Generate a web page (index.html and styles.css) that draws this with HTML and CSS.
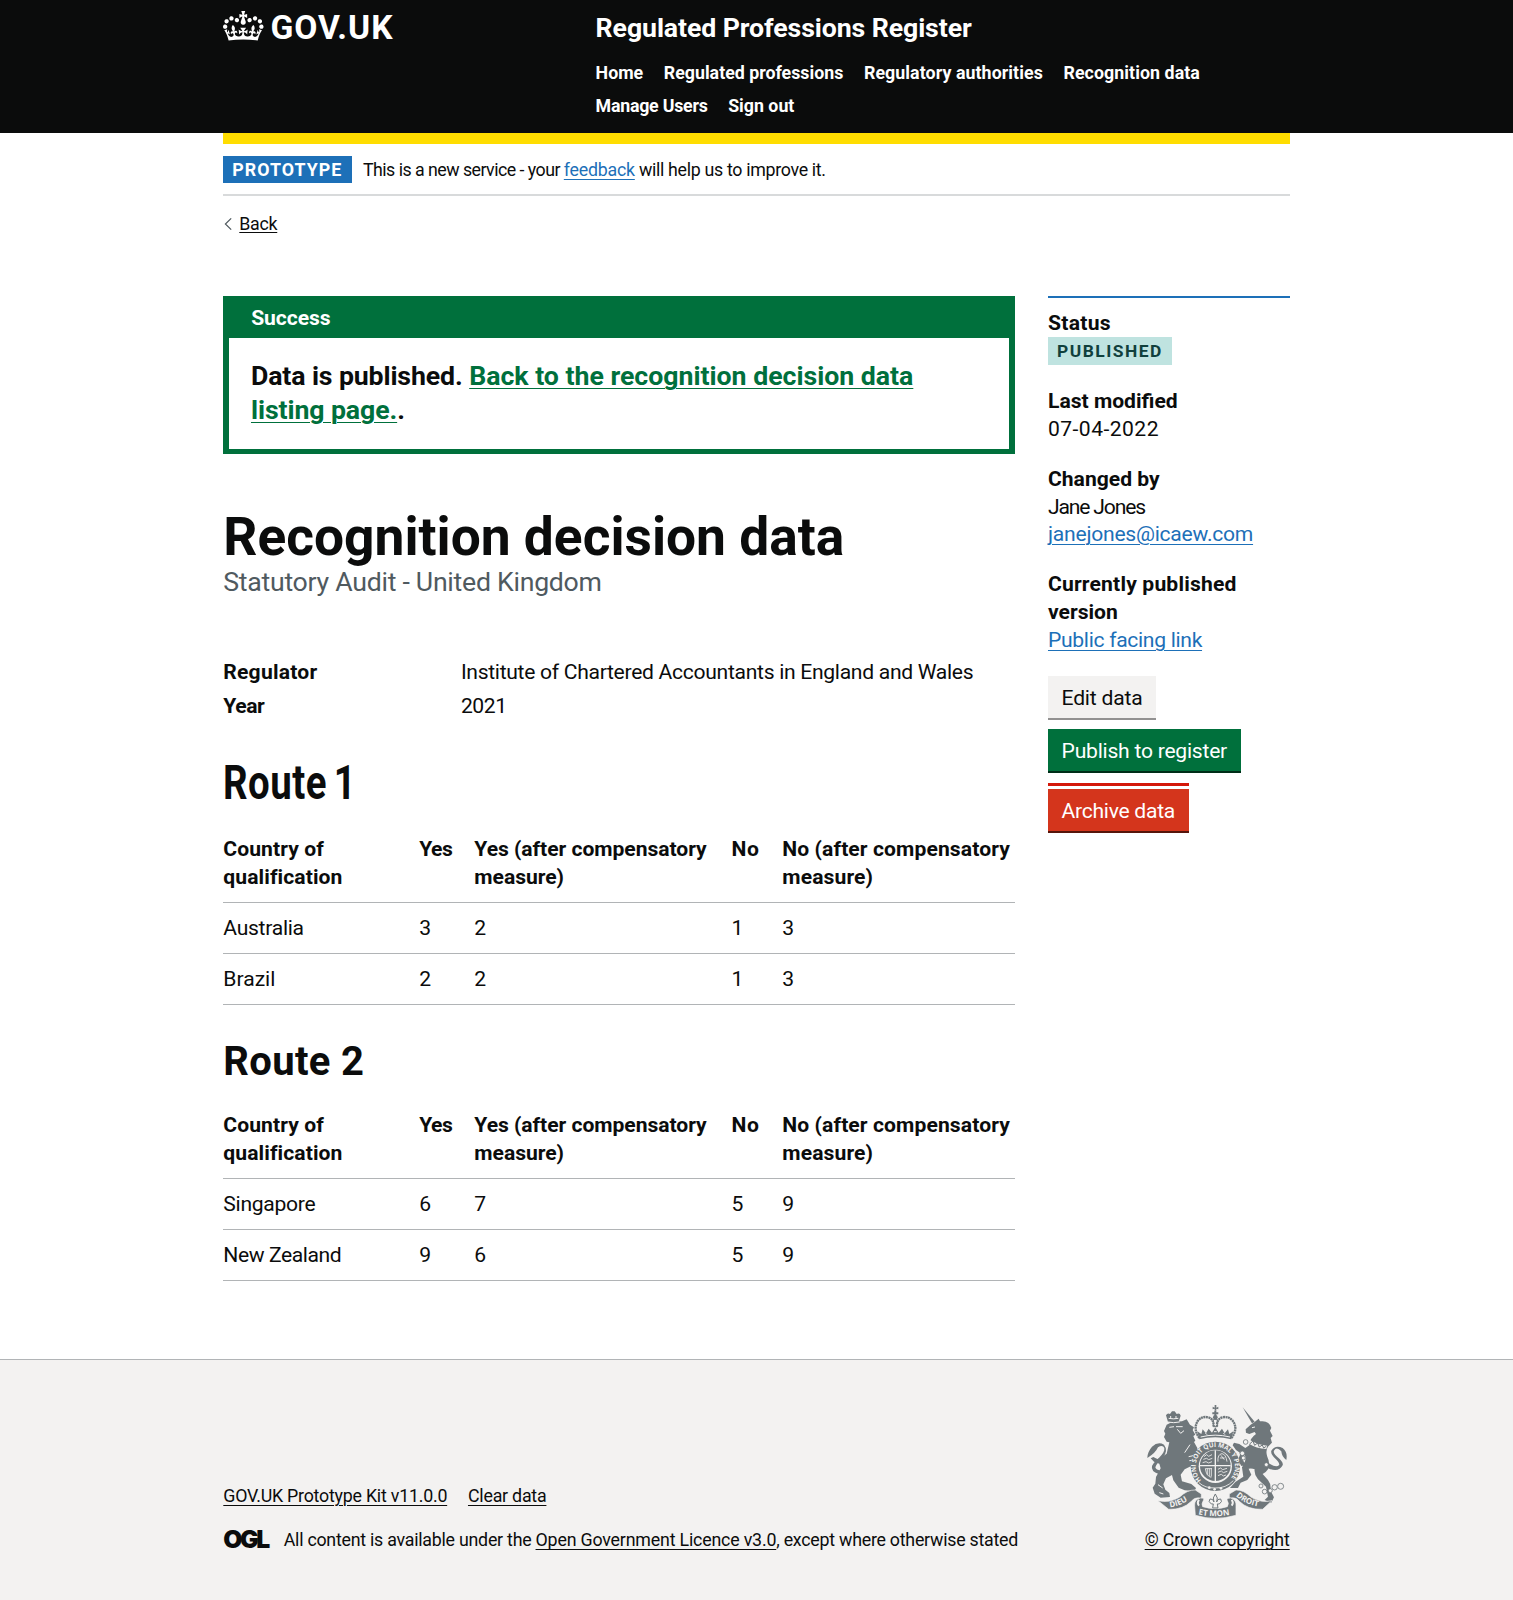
FILE: index.html
```html
<!DOCTYPE html>
<html lang="en">
<head>
<meta charset="utf-8">
<title>Recognition decision data - Regulated Professions Register</title>
<link rel="stylesheet" href="styles.css">
</head>
<body>
<header class="header">
  <div class="container header-inner">
    <a class="logo" href="#">
      <svg class="logo-crown" viewBox="0 0 132 97" aria-hidden="true"><path fill="currentColor" fill-rule="evenodd" d="M25 30.2c3.5 1.5 7.7-.2 9.1-3.7 1.5-3.6-.2-7.8-3.9-9.2-3.6-1.4-7.6.3-9.1 3.9-1.4 3.5.3 7.5 3.9 9zM9 39.5c3.6 1.5 7.8-.2 9.2-3.7 1.5-3.6-.2-7.8-3.9-9.1-3.6-1.5-7.6.2-9.1 3.8-1.4 3.5.3 7.5 3.8 9zM4.4 57.2c3.5 1.5 7.7-.2 9.1-3.8 1.5-3.6-.2-7.7-3.9-9.1-3.5-1.5-7.6.3-9.1 3.8-1.4 3.5.3 7.6 3.9 9.1zm38.3-21.4c3.5 1.5 7.7-.2 9.1-3.8 1.5-3.6-.2-7.7-3.9-9.1-3.6-1.5-7.6.3-9.1 3.8-1.3 3.6.4 7.7 3.9 9.1zm64.4-5.6c-3.6 1.5-7.8-.2-9.1-3.7-1.5-3.6.2-7.8 3.8-9.2 3.6-1.4 7.7.3 9.2 3.9 1.3 3.5-.4 7.5-3.9 9zm15.9 9.3c-3.6 1.5-7.7-.2-9.1-3.7-1.5-3.6.2-7.8 3.7-9.1 3.6-1.5 7.7.2 9.2 3.8 1.5 3.5-.3 7.5-3.8 9zm4.7 17.7c-3.6 1.5-7.8-.2-9.2-3.8-1.5-3.6.2-7.7 3.9-9.1 3.6-1.5 7.7.3 9.2 3.8 1.3 3.5-.4 7.6-3.9 9.1zM89.3 35.8c-3.6 1.5-7.8-.2-9.2-3.8-1.4-3.6.2-7.7 3.9-9.1 3.6-1.5 7.7.3 9.2 3.8 1.4 3.6-.3 7.7-3.9 9.1zM69.7 17.7l8.9 4.7V9.3l-8.9 2.8c-.2-.3-.5-.6-.9-.9L72.4 0H59.6l3.5 11.2c-.3.3-.6.5-.9.9l-8.8-2.8v13.1l8.8-4.7c.3.3.6.7.9.9l-5 15.4v.1c-.2.8-.4 1.6-.4 2.4 0 4.1 3.1 7.5 7 8.1h.2c.3 0 .7.1 1 .1.4 0 .7 0 1-.1h.2c4-.6 7.1-4.1 7.1-8.1 0-.8-.1-1.7-.4-2.4V34l-5.1-15.4c.4-.2.7-.6 1-.9zM66 92.8c16.9 0 32.8 1.1 47.1 3.2 4-16.9 8.9-26.7 14-33.5l-9.6-3.4c1 4.9 1.1 7.2 0 10.2-1.5-1.4-3-4.3-4.2-8.7L108.6 76c2.8-2 5-3.2 7.5-3.3-4.4 9.4-10 11.9-13.6 11.2-4.3-.8-6.3-4.6-5.6-7.9 1-4.7 5.7-5.9 8-.5 4.3-8.7-3-11.4-7.6-8.8 7.1-7.2 7.9-13.5 2.1-21.1-8 6.1-8.1 12.3-4.5 20.8-4.7-5.4-12.1-2.5-9.5 6.2 3.4-5.2 7.9-2 7.2 3.1-.6 4.3-6.4 7.8-13.5 7.2-10.3-.9-10.9-8-11.2-13.8 2.5-.5 7.1 1.8 11 7.3L80.2 60c-4.1 4.4-8 5.3-12.3 5.4 1.4-4.4 8-11.6 8-11.6H55.5s6.4 7.2 7.9 11.6c-4.2-.1-8-1-12.3-5.4l1.4 16.4c3.9-5.5 8.5-7.7 10.9-7.3-.3 5.8-.9 12.8-11.1 13.8-7.2.6-12.9-2.9-13.5-7.2-.7-5 3.8-8.3 7.1-3.1 2.7-8.7-4.6-11.6-9.4-6.2 3.7-8.5 3.6-14.7-4.6-20.8-5.8 7.6-5 13.9 2.2 21.1-4.7-2.6-11.9.1-7.7 8.8 2.3-5.5 7.1-4.2 8.1.5.7 3.3-1.3 7.1-5.7 7.9-3.5.7-9-1.8-13.5-11.2 2.5.1 4.7 1.3 7.5 3.3l-4.7-15.4c-1.2 4.4-2.7 7.2-4.3 8.7-1.1-3-.9-5.3 0-10.2l-9.5 3.4c5 6.9 9.9 16.7 14 33.5 14.8-2.1 30.8-3.2 47.7-3.2z"/></svg>
      <span class="logo-text">GOV.UK</span>
    </a>
    <div class="header-content">
      <a class="service-name" href="#">Regulated Professions Register</a>
      <nav class="nav">
        <a href="#">Home</a>
        <a href="#">Regulated professions</a>
        <a href="#" class="nav-open">Regulatory authorities</a>
        <a href="#" class="nav-open">Recognition data</a>
        <a href="#" class="nav-tight">Manage Users</a>
        <a href="#">Sign out</a>
      </nav>
    </div>
  </div>
</header>

<div class="container">
  <div class="header-bar"></div>
  <div class="phase">
    <strong class="phase-tag">PROTOTYPE</strong>
    <span class="phase-text"><span class="phase-intro">This is a new service - your </span><a class="link phase-link" href="#">feedback</a> will help us to improve it.</span>
  </div>
  <a class="back" href="#"><svg class="back-icon" viewBox="0 0 8 12" aria-hidden="true"><path d="M7.2.4 1.4 6l5.8 5.6" fill="none" stroke="#505a5f" stroke-width="1.2"/></svg><span class="back-text">Back</span></a>

  <main class="main">
    <div class="content">
      <section class="banner">
        <h2 class="banner-title">Success</h2>
        <div class="banner-body"><span class="banner-lead">Data is published.</span> <a href="#">Back to the recognition decision data <br><span class="banner-end">listing page.</span></a>.</div>
      </section>
      <h1 class="title">Recognition decision data</h1>
      <p class="caption">Statutory Audit - United Kingdom</p>
      <dl class="summary">
        <dt class="regulator">Regulator</dt><dd>Institute of Chartered Accountants in England and Wales</dd>
        <dt class="year">Year</dt><dd class="digits">2021</dd>
      </dl>

      <h2 class="route route-narrow"><span>Route 1</span></h2>
      <table class="table">
        <colgroup><col class="c1"><col class="c2"><col class="c3"><col class="c4"><col class="c5"></colgroup>
        <thead><tr><th>Country of qualification</th><th class="yes">Yes</th><th>Yes (after compensatory measure)</th><th class="no">No</th><th class="no-after">No (after compensatory measure)</th></tr></thead>
        <tbody>
          <tr><td>Australia</td><td>3</td><td>2</td><td>1</td><td>3</td></tr>
          <tr><td class="open">Brazil</td><td>2</td><td>2</td><td>1</td><td>3</td></tr>
        </tbody>
      </table>

      <h2 class="route">Route 2</h2>
      <table class="table">
        <colgroup><col class="c1"><col class="c2"><col class="c3"><col class="c4"><col class="c5"></colgroup>
        <thead><tr><th>Country of qualification</th><th class="yes">Yes</th><th>Yes (after compensatory measure)</th><th class="no">No</th><th class="no-after">No (after compensatory measure)</th></tr></thead>
        <tbody>
          <tr><td>Singapore</td><td>6</td><td>7</td><td>5</td><td>9</td></tr>
          <tr><td class="tight">New Zealand</td><td>9</td><td>6</td><td>5</td><td>9</td></tr>
        </tbody>
      </table>
    </div>

    <aside class="side">
      <div class="side-block"><strong class="status">Status</strong><br><span class="tag">PUBLISHED</span></div>
      <div class="side-block"><strong>Last modified</strong><br><span class="date">07-04-2022</span></div>
      <div class="side-block"><strong>Changed by</strong><br><span class="name">Jane Jones</span><br><a class="link email" href="#">janejones@icaew.com</a></div>
      <div class="side-block"><strong class="currently">Currently published</strong><br><strong>version</strong><br><a class="link public" href="#">Public facing link</a></div>
      <a class="button button-grey" href="#">Edit data</a>
      <a class="button button-green" href="#">Publish to register</a>
      <div class="archive"><a class="button button-red" href="#">Archive data</a></div>
    </aside>
  </main>
</div>

<footer class="footer">
  <div class="container footer-inner">
    <div class="footer-left">
      <div class="footer-links"><a href="#">GOV.UK Prototype Kit v11.0.0</a><a href="#">Clear data</a></div>
      <div class="licence"><span class="ogl">OGL</span><span>All content is available under the <a class="licence-link" href="#">Open Government Licence v3.0</a>, except where otherwise stated</span></div>
    </div>
    <div class="footer-right">
      <svg class="crest" viewBox="48 160 424 346" aria-hidden="true">
        <defs>
          <path id="ring" d="M214 389A59 59 0 1 1 300 387"/>
          <path id="scroll-left" d="M120 470Q158 466 188 438"/>
          <path id="scroll-mid" d="M205 491Q256 503 312 490"/>
          <path id="scroll-right" d="M318 436Q345 464 400 470"/>
        </defs>
        <!-- lion -->
        <g fill="#6f777b">
          <path d="M110 222l16-8 30-2 14-6 10 16 12 8-4 8 8 14-6 4 6 14-4 4 10 18 0 14 8 14-6 14-16-2-4 14-20 10-12 16 4 20 28 8 14 12-4 9-30-2-18-8-16-22-4-16-18 10-8 18 6 16 12 10 2 12-28 2-18-12-6-18 8-12 2-20 14-26-4-14-16-6-10-10 8-4 12 6 8-2 20-14 8-34-8-2-8-14 4-10-4-8z"/>
          <path d="M114 214l-6-20q4-8 12-4l6-8h8l6 8q10-4 12 5l-6 19q-16 4-32 0z"/>
          <path d="M86 370Q62 362 66 346C74 328 106 312 103 292Q98 281 84 290Q76 308 52 322Q52 304 66 288Q84 272 102 282Q116 300 98 322Q78 340 76 350Q78 358 92 360z"/>
        </g>
        <g fill="none" stroke="#f3f2f1" stroke-width="3">
          <path d="M113 214q18 4 36 0M116 203q14 3 29 0M122 196v6M138 196v6M118 230l14-2M142 236l10 12 10-8M138 228l20 0M84 402l14 10M88 426l12 4M180 282l-16 24M176 318l14-3M178 330l13-1"/>
        </g>
        <!-- unicorn -->
        <g fill="#6f777b">
          <path d="M338 170L374 213L366 218z"/>
          <path d="M374 214L386 204L390 212Q418 208 424 232L420 240L428 256L422 262L426 276L414 288Q406 300 412 318Q422 338 414 356Q408 366 398 370L414 388Q424 400 422 420L432 440L424 456L404 448L414 438L408 408L384 386Q372 372 374 356Q366 352 356 354L364 372L352 388L332 396L324 412L300 412L316 394L340 378L336 350Q352 326 344 312L338 328L348 342L334 346L324 328L332 308L318 298L308 284L312 276L328 280L346 292L358 284Q358 264 378 250L374 244L358 250L348 246L347 236L362 222Z"/>
          <path d="M412 352Q446 368 458 344C464 328 426 314 432 300Q440 286 454 302Q456 320 469 328Q474 304 458 292Q436 282 424 300C420 318 448 328 448 342Q440 354 414 336z"/>
        </g>
        <path d="M360 268q24 15 52 17l-3 10q-30-2-52-16z" fill="#f3f2f1"/>
        <path d="M359 280l10-9 5 13 9-7 5 12 9-6 4 9 8-5" fill="none" stroke="#6f777b" stroke-width="3"/>
        <path d="M366 231l9-2" stroke="#f3f2f1" stroke-width="3"/>
        <g fill="#f3f2f1" stroke="#6f777b" stroke-width="2.5">
          <circle cx="347" cy="274" r="7"/><circle cx="337" cy="308" r="7"/><circle cx="340" cy="322" r="6"/><circle cx="409" cy="342" r="6"/><circle cx="393" cy="406" r="6"/><circle cx="404" cy="423" r="7"/><circle cx="421" cy="420" r="6"/><circle cx="434" cy="410" r="8"/><circle cx="452" cy="407" r="9"/>
        </g>
        <!-- shield and garter -->
        <circle cx="256" cy="347" r="74" fill="#6f777b"/>
        <circle cx="256" cy="347" r="50" fill="#f3f2f1"/>
        <circle cx="256" cy="345" r="46" fill="#6f777b"/>
        <path d="M256 299v92M210 345h92" stroke="#f3f2f1" stroke-width="4"/>
        <g fill="none" stroke="#f3f2f1" stroke-width="2.5">
          <path d="M222 318l8-6 6 5 10-5M220 326l10-3 6 4 11-4M218 336l10-3 8 4 10-4M264 333q-2-22 12-24 12 2 15 24M270 322l14 0M273 314l10 13M226 354q4 24 18 26M232 354v18M238 354v22M244 353v25M226 354h20M264 356l8-4 6 5 13-4M264 365l10-4 6 5 12-4M264 375l10-4 6 5 8-3"/>
          <path d="M207 396q18 17 49 16 32 1 54-22"/>
        </g>
        <g fill="#f3f2f1"><circle cx="238" cy="411" r="4"/><circle cx="254" cy="416" r="4"/><circle cx="273" cy="413" r="4"/></g>
        <text class="crest-ring" textLength="268" lengthAdjust="spacingAndGlyphs"><textPath href="#ring">HONI SOIT QUI MAL Y PENSE</textPath></text>
        <!-- royal crown -->
        <path d="M208 262q-20-28-4-52 12-14 30-10 18 4 17 28M304 262q22-28 4-52-12-14-30-10-18 4-17 28" fill="none" stroke="#6f777b" stroke-width="7" stroke-dasharray="6 1.5"/>
        <path d="M256 180v16M247 188h18" stroke="#6f777b" stroke-width="6"/>
        <path d="M248 168l6 3v-8h5v8l6-3v8l-6-2v6h-5v-6l-6 2z" fill="#6f777b"/>
        <circle cx="256" cy="200" r="7" fill="#6f777b"/>
        <path d="M250 206h12v22h-12z" fill="none" stroke="#6f777b" stroke-width="3"/>
        <path d="M208 266l-6-24 12 8 4-14 10 12 8-14 10 12 10-16 10 16 10-12 8 14 10-12 4 14 12-8-6 24q-48-12-96 0z" fill="#6f777b"/>
        <path d="M212 259q44-11 88 0M226 247l5 5M280 247l5 5M252 243h8" fill="none" stroke="#f3f2f1" stroke-width="3"/>
        <!-- motto scroll -->
        <g fill="#6f777b" stroke="#f3f2f1" stroke-width="2">
          <path d="M84 450Q118 458 148 440Q172 417 196 418L214 430L214 443Q196 438 184 452Q158 478 116 476z"/>
          <path d="M426 450Q394 458 364 440Q340 417 318 418L298 430L298 443Q318 438 328 452Q354 478 398 476z"/>
          <path d="M194 466Q192 446 212 442Q226 442 219 452Q214 460 218 468Q256 480 292 468Q298 458 292 450Q288 442 302 442Q320 448 318 466L318 494Q256 512 196 494z"/>
        </g>
        <path d="M207 448q-7 9 0 17M305 448q7 9 0 17" fill="none" stroke="#f3f2f1" stroke-width="6"/>
        <path d="M256 430q-10 12-4 24-2-10-12-9-7 8 4 15h6l-2 12h16l-2-12h6q11-7 4-15-10-1-12 9 6-12-4-24z" fill="#f3f2f1" stroke="#6f777b" stroke-width="3"/>
        <text class="crest-scroll"><textPath href="#scroll-left">DIEU</textPath></text>
        <text class="crest-scroll"><textPath href="#scroll-mid">ET MON</textPath></text>
        <text class="crest-scroll"><textPath href="#scroll-right">DROIT</textPath></text>
      </svg>
      <a class="copyright" href="#">© Crown copyright</a>
    </div>
  </div>
</footer>
</body>
</html>
```
FILE: styles.css
```css
* { box-sizing: border-box; }

body {
  margin: 0;
  min-height: 1600px;
  display: flex;
  flex-direction: column;
  background: #fff;
  color: #0b0c0c;
  font-family: Roboto, "Liberation Sans", sans-serif;
  font-size: 21.1px;
  line-height: 27.8px;
  letter-spacing: -0.28px;
}

a { color: inherit; text-decoration-thickness: 1px; text-underline-offset: 3px; }
h1, h2, p, dl, dd { margin: 0; }
.link { color: #1d70b8; }

.container { width: 1066.4px; margin: 0 auto; }

/* Header */
.header { height: 133px; background: #0b0c0c; color: #fff; font-weight: 700; }
.header a { text-decoration: none; }
.header-inner { display: flex; }
.logo { width: 372.3px; display: flex; align-items: flex-start; }
.logo-crown { width: 40.5px; height: 30px; margin-top: 11.3px; }
.logo-text { margin: 7.4px 0 0 6.7px; font-size: 33.6px; line-height: 42px; letter-spacing: 0.95px; }
.header-content { padding-top: 12px; flex: 1; }
.service-name { display: block; font-size: 26.7px; line-height: 33.3px; letter-spacing: -0.1px; }
.nav {
  display: flex;
  flex-wrap: wrap;
  column-gap: 20.6px;
  margin-top: 10.7px;
  width: 660px;
  font-size: 17.8px;
  line-height: 33.4px;
  letter-spacing: 0;
}
.nav-open { letter-spacing: 0.07px; }
.nav-tight { letter-spacing: -0.24px; }

.header-bar { height: 11px; background: #ffdd00; }

/* Phase banner */
.phase {
  display: flex;
  align-items: center;
  height: 52px;
  border-bottom: 2px solid #d8dadb;
  font-size: 17.8px;
  line-height: 22.2px;
}
.phase-tag {
  width: 128.7px;
  height: 27.6px;
  margin: 1px 11px 0 0;
  padding: 3.4px 0 0 9px;
  background: #1d70b8;
  color: #fff;
  letter-spacing: 1.05px;
}
.phase-text { padding-top: 2px; letter-spacing: -0.31px; }
.phase-intro { letter-spacing: -0.53px; }
.phase-link { letter-spacing: -0.23px; }

.back {
  display: flex;
  width: 60px;
  align-items: center;
  margin-top: 16.5px;
  font-size: 17.8px;
  line-height: 22.2px;
  text-decoration: none;
}
.back-icon { width: 8px; height: 12px; margin: 0 7px 0 1px; }
.back-text { text-decoration: underline; text-decoration-thickness: 1px; text-underline-offset: 2px; }

/* Main columns */
.main { display: flex; gap: 33.3px; margin-top: 60.9px; }
.content { width: 791.4px; }
.side { flex: 1; }

.banner { padding: 0 5.5px 5.3px; background: #00703c; }
.banner-title {
  height: 42px;
  padding: 8px 0 0 22.4px;
  color: #fff;
  font-size: 21.1px;
  line-height: 27.8px;
  letter-spacing: -0.08px;
}
.banner-body {
  height: 111.4px;
  padding: 22.8px 0 0 22.2px;
  background: #fff;
  font-size: 26.7px;
  line-height: 33.3px;
  font-weight: 700;
  letter-spacing: -0.02px;
}
.banner-body a { color: #00703c; }
.banner-lead { letter-spacing: -0.13px; }
.banner-end { letter-spacing: -0.1px; }

.title { margin-top: 56px; font-size: 53.3px; line-height: 55.5px; letter-spacing: 0; }
.caption { color: #505a5f; font-size: 26.7px; line-height: 33.3px; }

.summary {
  display: grid;
  grid-template-columns: 237.6px 1fr;
  row-gap: 6.5px;
  margin-top: 58.7px;
}
.summary dt { font-weight: 700; }
.summary dd { letter-spacing: -0.3px; }
.summary .regulator { letter-spacing: 0.21px; }
.summary .year { letter-spacing: -0.45px; }
.summary .digits { letter-spacing: -0.4px; }

.route { height: 44px; font-size: 40px; line-height: 44px; letter-spacing: 0.34px; margin-top: 34.7px; }
.route-narrow { margin-top: 40.8px; font-size: 48px; letter-spacing: 0.6px; word-spacing: -4px; }
.route-narrow span { display: inline-block; transform: scaleX(0.8); transform-origin: left; }

.table { width: 791.4px; margin-top: 19.3px; border-collapse: collapse; table-layout: fixed; }
.route:not(.route-narrow) + .table { margin-top: 16px; }
.c1 { width: 196px; }
.c2 { width: 55px; }
.c3 { width: 257.3px; }
.c4 { width: 50.7px; }
.c5 { width: 232.4px; }
.table th, .table td {
  padding: 11.2px 0 11.2px;
  border-bottom: 1px solid #b1b4b6;
  text-align: left;
  vertical-align: top;
}
.table th { letter-spacing: -0.04px; }
.table th:first-child { padding-right: 60px; letter-spacing: 0.09px; }
.table th.yes { letter-spacing: -0.6px; }
.table th.no { letter-spacing: 0.5px; }
.table th.no-after { letter-spacing: 0.1px; }
.table .open { letter-spacing: 0; }
.table .tight { letter-spacing: -0.41px; }

/* Sidebar */
.side { border-top: 2px solid #1d70b8; padding-top: 11.6px; }
.side-block { margin-bottom: 22.2px; }
.side-block strong { letter-spacing: 0; }
.side-block .status { letter-spacing: 0.3px; }
.side-block .currently { letter-spacing: 0.17px; }
.tag {
  display: inline-block;
  width: 124.5px;
  height: 27.8px;
  padding: 1.4px 0 0 9px;
  background: #bfe3e0;
  color: #10403c;
  font-size: 17.4px;
  font-weight: 700;
  letter-spacing: 1.5px;
  vertical-align: top;
}
.date { letter-spacing: 0.45px; }
.name { letter-spacing: -1.16px; }
.email { letter-spacing: -0.24px; }
.public { letter-spacing: -0.31px; }

.button {
  display: table;
  height: 42px;
  margin-bottom: 11.4px;
  padding: 7.6px 13.6px 0;
  text-decoration: none;
}
.button-grey { background: #f3f2f1; box-shadow: 0 2px 0 #929191; letter-spacing: -0.2px; }
.button-green { background: #00703c; box-shadow: 0 2px 0 #002d18; color: #fff; letter-spacing: -0.24px; }
.button-red { background: #d4351c; box-shadow: 0 2px 0 #55150b; color: #fff; }
.archive { display: table; border-top: 3px solid #d4180a; padding-top: 3.4px; }

/* Footer */
.footer {
  flex: 1;
  margin-top: 78px;
  border-top: 1px solid #b1b4b6;
  background: #f3f2f1;
  font-size: 17.8px;
  line-height: 22.2px;
  letter-spacing: -0.24px;
}
.footer-inner { display: flex; justify-content: space-between; align-items: flex-end; padding-top: 43.6px; }
.footer-links { display: flex; gap: 20.8px; margin-bottom: 22.2px; }
.footer-links a { letter-spacing: -0.22px; }
.licence { display: flex; }
.licence-link { letter-spacing: -0.18px; }
.ogl { width: 60.4px; margin-top: -1px; font-family: Inter, sans-serif; font-size: 24.7px; font-weight: 900; letter-spacing: -2.4px; }
.footer-right { display: flex; flex-direction: column; align-items: flex-end; }
.crest { width: 141.3px; height: 115.3px; margin: 0 2px 10px 0; }
.copyright { letter-spacing: -0.13px; }
.crest-ring, .crest-scroll { fill: #f3f2f1; font-family: "Open Sans", sans-serif; font-weight: 700; letter-spacing: 0; }
.crest-ring { font-size: 20px; }
.crest-scroll { font-size: 24px; }
```
